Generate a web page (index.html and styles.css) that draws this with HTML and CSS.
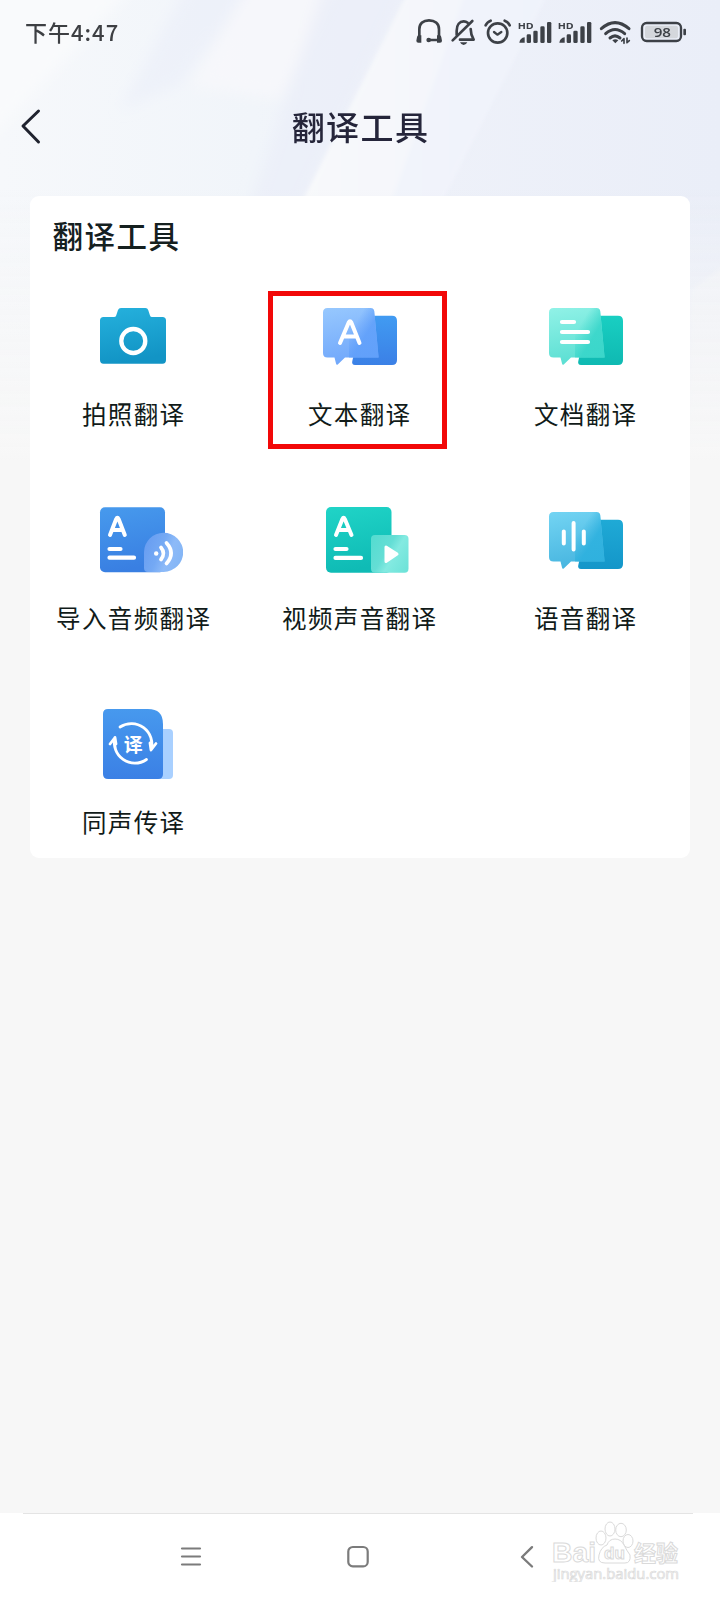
FILE: index.html
```html
<!DOCTYPE html>
<html lang="zh-CN">
<head>
<meta charset="utf-8">
<title>翻译工具</title>
<link rel="stylesheet" href="styles.css">
</head>
<body>
<div class="screen">
  <svg class="backdrop" viewBox="0 0 720 460" aria-hidden="true">
    <defs>
      <linearGradient id="sky" x1="0" y1="0" x2="1" y2="0"><stop offset="0" stop-color="#f6f8fb"/><stop offset=".35" stop-color="#f1f5fa"/><stop offset=".6" stop-color="#eef1f9"/><stop offset="1" stop-color="#eaeef8"/></linearGradient>
      <linearGradient id="fade" x1="0" y1="0" x2="0" y2="1"><stop offset=".4" stop-color="#f7f7f7" stop-opacity="0"/><stop offset="1" stop-color="#f7f7f7"/></linearGradient>
      <linearGradient id="ray" x1="0" y1="0" x2="1" y2="0"><stop offset="0" stop-color="#f8f9fb"/><stop offset="1" stop-color="#f1f4fa"/></linearGradient>
      <filter id="soft" x="-20%" y="-20%" width="140%" height="140%"><feGaussianBlur stdDeviation="7"/></filter>
      <filter id="edge" x="-20%" y="-20%" width="140%" height="140%"><feGaussianBlur stdDeviation="2"/></filter>
    </defs>
    <rect width="720" height="460" fill="url(#sky)"/>
    <g filter="url(#soft)">
      <path d="M-20 -20H140L-20 150Z" fill="#fafbfc" opacity=".8"/>
      <path d="M190 -20H260L180 84L120 110Z" fill="#e9eefa" opacity=".5"/>
      <path d="M252 -20H340L280 100L190 86Z" fill="#f7f8fb" opacity=".8"/>
      <path d="M325 -20H412L302 206H250Z" fill="#e9ecf8" opacity=".6"/>
    </g>
    <g filter="url(#edge)">
      <path d="M414 -20H555L440 206H300Z" fill="url(#ray)"/>
      <path d="M555 -20H470L390 206H440Z" fill="#eff2fb" opacity=".6"/>
      <path d="M730 262L690 290V470H730Z" fill="#f4f5f9" opacity=".6"/>
    </g>
    <rect width="720" height="460" fill="url(#fade)"/>
  </svg>

  <header class="status">
    <span class="clock">下午4:47</span>
    <svg class="status-icons" viewBox="0 0 960 210" fill="none" stroke="#3d4147" stroke-width="8" stroke-linecap="round" stroke-linejoin="round">
      <path d="M58 122V88C58 70 70 61 87 61S117 70 117 88V122" stroke-width="8"/>
      <path d="M51 112q0-6 6-6h7v22h-9q-6 0-6-6zM124 112q0-6-6-6h-7v22h9q6 0 6-6z" fill="#3d4147" stroke="none"/>
      <path d="M86 120H116" stroke-width="8"/><circle cx="86" cy="120" r="7" fill="#3d4147" stroke="none"/>
      <path d="M158 121L217 63" stroke-width="8"/>
      <path d="M170 104V92C170 74 179 64 191 64Q198 64 203 68M212 87Q212 103 221 119H180" stroke-width="8"/>
      <path d="M180 127h22q-4 8-11 8t-11-8z" fill="#3d4147" stroke="none"/>
      <circle cx="293" cy="99" r="29" stroke-width="8"/><path d="M257 76Q261 66 272 62M329 76Q325 66 314 62" stroke-width="8"/><path d="M282 96L292 104L304 96" stroke-width="7"/>
      <g fill="#3d4147" stroke="none">
        <text class="hd" x="353" y="87" textLength="48" lengthAdjust="spacingAndGlyphs">HD</text><text class="hd" x="473" y="87" textLength="48" lengthAdjust="spacingAndGlyphs">HD</text>
        <g id="bars"><path d="M358 128q2-14 16-16v16z"/><rect x="380" y="103" width="13" height="26" rx="4"/><rect x="400" y="92" width="13" height="37" rx="4"/><rect x="421" y="79" width="13" height="50" rx="4"/><rect x="441" y="66" width="13" height="63" rx="4"/></g>
        <use href="#bars" x="120"/>
      </g>
      <path d="M604 86Q645 50 687 86M617 101Q645 76 674 101M630 114Q645 101 660 114" stroke-width="9"/>
      <path d="M637 121Q646 114 655 121L646 130Z" fill="#3d4147" stroke="none"/>
      <path d="M672 130V116L665 123M681 114V128L688 122" stroke-width="5"/>
      <rect x="726" y="69" width="117" height="54" rx="14" stroke-width="7"/>
      <rect x="735" y="77" width="99" height="38" rx="7" fill="#d4d7dc" stroke="none"/>
      <rect x="850" y="86" width="8" height="20" rx="3" fill="#3d4147" stroke="none"/>
      <text class="charge" x="787" y="112" text-anchor="middle" textLength="52" lengthAdjust="spacingAndGlyphs">98</text>
    </svg>
  </header>

  <div class="title-bar">
    <svg class="back" viewBox="0 0 24 40"><path d="M20.500 5L5 20L20.500 36" fill="none" stroke="#20232f" stroke-width="3" stroke-linecap="round" stroke-linejoin="round"/></svg>
    <h1 class="page-title">翻译工具</h1>
  </div>

  <main class="card">
    <h2 class="card-title">翻译工具</h2>
    <div class="grid">
      <div class="tool">
        <svg class="icon" viewBox="0 0 100 80">
          <defs><linearGradient id="cam" x1="0" y1="0" x2=".2" y2="1"><stop offset="0" stop-color="#25b1dd"/><stop offset="1" stop-color="#1294c5"/></linearGradient></defs>
          <path d="M20.500 17H31Q32.700 17 33.200 15.500L35 10Q35.700 8 38 8H62.500Q64.500 8 65.200 10L67 15.500Q67.500 17 69 17H79.500Q83 17 83 20.500V60Q83 63.700 79.500 63.700H20.500Q17 63.700 17 60V20.500Q17 17 20.500 17Z" fill="url(#cam)"/>
          <circle cx="50.300" cy="41" r="12" fill="none" stroke="#fff" stroke-width="4.300"/>
        </svg>
        <span class="label">拍照翻译</span>
      </div>
      <div class="tool">
        <svg class="icon" viewBox="0 0 100 80">
          <defs>
            <linearGradient id="tb" x1="0" y1="0" x2="0" y2="1"><stop offset="0" stop-color="#419bf2"/><stop offset="1" stop-color="#3b80e6"/></linearGradient>
            <linearGradient id="tf" x1="0" y1="0" x2=".2" y2="1"><stop offset="0" stop-color="#97c8fe"/><stop offset="1" stop-color="#71a8fb"/></linearGradient>
            <linearGradient id="ts" gradientUnits="userSpaceOnUse" x1="45" y1="25" x2="58" y2="33"><stop offset="0" stop-color="#5f9ffa" stop-opacity="0"/><stop offset="1" stop-color="#5f9ffa" stop-opacity=".85"/></linearGradient>
          </defs>
          <path d="M54 15.700H83Q88 15.700 88 21V60Q88 65 83 65H46Q42.500 65 43.300 61Z" fill="url(#tb)"/>
          <path id="bubble" d="M18.500 8H61.500Q64.700 8 65.200 11L69.600 57.500H36L29 64.200Q27.500 65.500 27 63.500L25.500 57.500H18.500Q14 57.500 14 53V12.500Q14 8 18.500 8Z" fill="url(#tf)"/>
          <path d="M40 8H61.500Q64.700 8 65.200 11L69.600 57.500H40Z" fill="url(#ts)"/>
          <path d="M31 43L39.700 22.500Q41 20 42.300 22.500L50.500 43M34.500 36.500H47" fill="none" stroke="#fff" stroke-width="4" stroke-linecap="round" stroke-linejoin="round"/>
        </svg>
        <span class="label">文本翻译</span>
        <span class="highlight"></span>
      </div>
      <div class="tool">
        <svg class="icon" viewBox="0 0 100 80">
          <defs>
            <linearGradient id="db" x1="0" y1="0" x2="0" y2="1"><stop offset="0" stop-color="#19cfc2"/><stop offset="1" stop-color="#0fb9b2"/></linearGradient>
            <linearGradient id="df" x1="0" y1="0" x2=".2" y2="1"><stop offset="0" stop-color="#91f2e7"/><stop offset="1" stop-color="#5cdfd3"/></linearGradient>
            <linearGradient id="ds" gradientUnits="userSpaceOnUse" x1="45" y1="25" x2="60" y2="34"><stop offset="0" stop-color="#35d5c9" stop-opacity="0"/><stop offset="1" stop-color="#35d5c9" stop-opacity=".85"/></linearGradient>
          </defs>
          <path d="M54 15.700H83Q88 15.700 88 21V60Q88 65 83 65H46Q42.500 65 43.300 61Z" fill="url(#db)"/>
          <path d="M18.500 8H61.500Q64.700 8 65.200 11L69.600 57.500H36L29 64.200Q27.500 65.500 27 63.500L25.500 57.500H18.500Q14 57.500 14 53V12.500Q14 8 18.500 8Z" fill="url(#df)"/>
          <path d="M40 8H61.500Q64.700 8 65.200 11L69.600 57.500H40Z" fill="url(#ds)"/>
          <path d="M27 22H39M27 32H53M27 42H53" stroke="#fff" stroke-width="4.200" stroke-linecap="round"/>
        </svg>
        <span class="label">文档翻译</span>
      </div>
      <div class="tool">
        <svg class="icon" viewBox="0 0 100 80">
          <defs>
            <linearGradient id="aub" x1="0" y1="0" x2=".2" y2="1"><stop offset="0" stop-color="#479aed"/><stop offset="1" stop-color="#397fe2"/></linearGradient>
            <linearGradient id="auf" x1="0" y1=".3" x2="1" y2=".7"><stop offset="0" stop-color="#689df1"/><stop offset=".4" stop-color="#74a9f4"/><stop offset=".65" stop-color="#8dbaf8"/><stop offset="1" stop-color="#83b5f5"/></linearGradient>
          </defs>
          <rect x="17" y="3.300" width="65" height="65" rx="5" fill="url(#aub)"/>
          <path d="M61 48.300A19.600 19.600 0 1 1 80.700 67.900H65Q61 67.900 61 64Z" fill="url(#auf)"/>
          <path d="M27 31L33.200 15Q34.400 12.500 35.600 15L41.800 31M30 26H39" fill="none" stroke="#fff" stroke-width="4" stroke-linecap="round" stroke-linejoin="round"/>
          <path d="M26.500 45H37.500M26.500 53.700H51" stroke="#fff" stroke-width="4.200" stroke-linecap="round"/>
          <circle cx="73.200" cy="49.500" r="2.200" fill="#fff"/>
          <path d="M78 43.500Q82.800 49.300 78 55.500M83.500 39Q92.700 49.300 83.500 59.500" fill="none" stroke="#fff" stroke-width="3.700" stroke-linecap="round"/>
        </svg>
        <span class="label">导入音频翻译</span>
      </div>
      <div class="tool">
        <svg class="icon" viewBox="0 0 100 80">
          <defs>
            <linearGradient id="vb" x1="0" y1="0" x2=".2" y2="1"><stop offset="0" stop-color="#20d4c7"/><stop offset="1" stop-color="#0fbbb5"/></linearGradient>
            <linearGradient id="vf" x1="0" y1=".2" x2="1" y2=".8"><stop offset="0" stop-color="#56dcd1"/><stop offset=".4" stop-color="#64ded5"/><stop offset=".6" stop-color="#83eae1"/><stop offset="1" stop-color="#6fe3d9"/></linearGradient>
          </defs>
          <rect x="17" y="3" width="65.500" height="65.700" rx="5" fill="url(#vb)"/>
          <rect x="62" y="31" width="37.500" height="37.700" rx="4" fill="url(#vf)"/>
          <path d="M27 31L33.400 15Q34.600 12.500 35.800 15L42.500 31M30 26H39.500" fill="none" stroke="#fff" stroke-width="4" stroke-linecap="round" stroke-linejoin="round"/>
          <path d="M26.500 45H37.500M26.500 53.900H52" stroke="#fff" stroke-width="4.200" stroke-linecap="round"/>
          <path d="M77 43V57.500L88 50Z" fill="#fff" stroke="#fff" stroke-width="3" stroke-linejoin="round"/>
        </svg>
        <span class="label">视频声音翻译</span>
      </div>
      <div class="tool">
        <svg class="icon" viewBox="0 0 100 80">
          <defs>
            <linearGradient id="sb" x1="0" y1="0" x2="0" y2="1"><stop offset="0" stop-color="#1faad6"/><stop offset="1" stop-color="#1496c9"/></linearGradient>
            <linearGradient id="sf" x1="0" y1="0" x2=".2" y2="1"><stop offset="0" stop-color="#73d4f3"/><stop offset="1" stop-color="#48b6e0"/></linearGradient>
            <linearGradient id="ss" gradientUnits="userSpaceOnUse" x1="46" y1="25" x2="60" y2="34"><stop offset="0" stop-color="#2bb0de" stop-opacity="0"/><stop offset="1" stop-color="#2bb0de" stop-opacity=".85"/></linearGradient>
          </defs>
          <path d="M54 15.700H83Q88 15.700 88 21V60Q88 65 83 65H46Q42.500 65 43.300 61Z" fill="url(#sb)"/>
          <path d="M18.500 8H61.500Q64.700 8 65.200 11L69.600 57.500H36L29 64.200Q27.500 65.500 27 63.500L25.500 57.500H18.500Q14 57.500 14 53V12.500Q14 8 18.500 8Z" fill="url(#sf)"/>
          <path d="M40 8H61.500Q64.700 8 65.200 11L69.600 57.500H40Z" fill="url(#ss)"/>
          <path d="M28.800 27.500V39.500M38.600 19V45.500M48.800 27.500V39.500" stroke="#fff" stroke-width="4" stroke-linecap="round"/>
        </svg>
        <span class="label">语音翻译</span>
      </div>
      <div class="tool">
        <svg class="icon" viewBox="0 0 100 80">
          <defs><linearGradient id="ib" x1="0" y1="0" x2="0" y2="1"><stop offset="0" stop-color="#4799ee"/><stop offset="1" stop-color="#3b80e5"/></linearGradient></defs>
          <rect x="60" y="21" width="30" height="50" rx="4" fill="#a9d0ff"/>
          <path d="M25 1H65Q80 1 80 16V66Q80 71 75 71H25Q20 71 20 66V6Q20 1 25 1Z" fill="url(#ib)"/>
          <path d="M37 19A20.500 20.500 0 0 1 68 42L73 35.500M68 42L67 35M63.500 51.500A20.500 20.500 0 0 1 32 29.500L27 36M32 29.500L33 36" fill="none" stroke="#fff" stroke-width="2.800" stroke-linecap="round" stroke-linejoin="round"/>
          <text class="glyph" x="50.300" y="43.500" text-anchor="middle">译</text>
        </svg>
        <span class="label">同声传译</span>
      </div>
    </div>
  </main>

  <footer class="nav">
    <svg class="nav-icon menu" viewBox="0 0 24 24" fill="none" stroke="#7b7b7b" stroke-width="2.200" stroke-linecap="round"><path d="M3 3.500H21M3 11.500H21M3 19.500H21"/></svg>
    <svg class="nav-icon home" viewBox="0 0 24 24" fill="none" stroke="#7b7b7b" stroke-width="2.200"><rect x="2.300" y="2" width="19.400" height="19.400" rx="4.500"/></svg>
    <svg class="nav-icon prev" viewBox="0 0 24 24" fill="none" stroke="#7b7b7b" stroke-width="2.400" stroke-linecap="round" stroke-linejoin="round"><path d="M17 2.200L7 12L17 21.500"/></svg>
    <div class="watermark">
      <svg class="mark" viewBox="0 0 135 72" fill="#fff" stroke="#dadada" stroke-width="1">
        <text class="brand" x="1" y="43" textLength="44" lengthAdjust="spacingAndGlyphs">Bai</text>
        <ellipse cx="50" cy="28" rx="5" ry="7"/><ellipse cx="59" cy="19" rx="5" ry="7"/><ellipse cx="70" cy="20" rx="5.300" ry="6.700"/><ellipse cx="77" cy="31" rx="5" ry="6.500"/>
        <path d="M64 29Q70 29 73 35T79 45Q80 53 74 53H54Q46 53 48 45T56 35Q58 29 64 29Z"/>
        <text class="du" x="53" y="49">du</text>
        <text class="cjk" x="83" y="51">经验</text>
        <text class="url" x="2" y="69" textLength="126" lengthAdjust="spacingAndGlyphs">jingyan.baidu.com</text>
      </svg>
    </div>
  </footer>
</div>
</body>
</html>
```
FILE: styles.css
```css
body {
  margin: 0;
  background: #f7f7f7;
  font-family: "Noto Sans CJK SC", sans-serif;
}
.screen {
  position: relative;
  display: flex;
  flex-direction: column;
  width: 720px;
  height: 1600px;
  overflow: hidden;
}
.backdrop {
  position: absolute;
  top: 0;
  left: 0;
  width: 720px;
  height: 460px;
}
.status {
  position: relative;
  display: flex;
  justify-content: space-between;
  height: 70px;
}
.clock {
  padding-left: 25px;
  font-size: 22px;
  font-weight: 500;
  line-height: 63px;
  color: #3d3f43;
  letter-spacing: 1px;
}
.status-icons {
  width: 320px;
  height: 70px;
}
.hd {
  font: 700 27px "Open Sans", sans-serif;
}
.charge {
  font: 600 38px "Open Sans", sans-serif;
  fill: #3d4147;
  stroke: none;
}
.title-bar {
  position: relative;
  display: flex;
  align-items: center;
  height: 112px;
}
.back {
  width: 24px;
  height: 40px;
  margin-left: 18px;
}
.page-title {
  flex: 1;
  margin: 0 41px 0 0;
  text-align: center;
  font-size: 33px;
  font-weight: 500;
  line-height: 48px;
  letter-spacing: 1.4px;
  color: #25253a;
}
.card {
  position: relative;
  box-sizing: border-box;
  width: 660px;
  height: 662px;
  margin: 14px 30px 0;
  background: #fff;
  border-radius: 9px;
}
.card-title {
  height: 104px;
  margin: 0;
  padding-left: 22.5px;
  box-sizing: border-box;
  font-size: 30.5px;
  font-weight: 500;
  line-height: 78px;
  letter-spacing: 1.5px;
  color: #15201f;
}
.grid {
  display: grid;
  grid-template-columns: 206px 246px 206px;
  grid-auto-rows: 204px;
}
.tool {
  position: relative;
  display: flex;
  flex-direction: column;
  align-items: center;
}
.icon {
  width: 100px;
  height: 80px;
}
.label {
  margin-top: 15px;
  font-size: 24.5px;
  line-height: 38px;
  letter-spacing: 1.4px;
  margin-right: -1.4px;
  color: #111b19;
  white-space: nowrap;
}
.highlight {
  position: absolute;
  box-sizing: border-box;
  left: 32px;
  top: -9px;
  width: 179px;
  height: 158px;
  border: 5px solid #f20808;
}
.glyph {
  font-size: 19px;
  font-weight: 700;
  fill: #fff;
}
.nav {
  position: relative;
  display: flex;
  box-sizing: border-box;
  height: 87px;
  margin-top: auto;
  padding-top: 32px;
  background: linear-gradient(#e4e4e4, #e4e4e4) 23px 0 / 670px 1px no-repeat #fff;
}
.nav-icon {
  width: 24px;
  height: 24px;
}
.menu {
  margin-left: 179px;
}
.home {
  margin-left: 143px;
}
.prev {
  margin-left: 145px;
}
.watermark {
  width: 135px;
  height: 72px;
  margin: -21px 0 0 12px;
}
.mark {
  display: block;
  width: 135px;
  height: 72px;
  margin-top: -14px;
}
.brand {
  font: 700 28px "Liberation Sans", sans-serif;
  transform: translateY(9px);
}
.du {
  font: 700 17px "Liberation Sans", sans-serif;
}
.cjk {
  font-size: 22px;
  font-weight: 700;
}
.url {
  font: 400 14px "Open Sans", sans-serif;
  stroke-width: 0.7px;
}
```
